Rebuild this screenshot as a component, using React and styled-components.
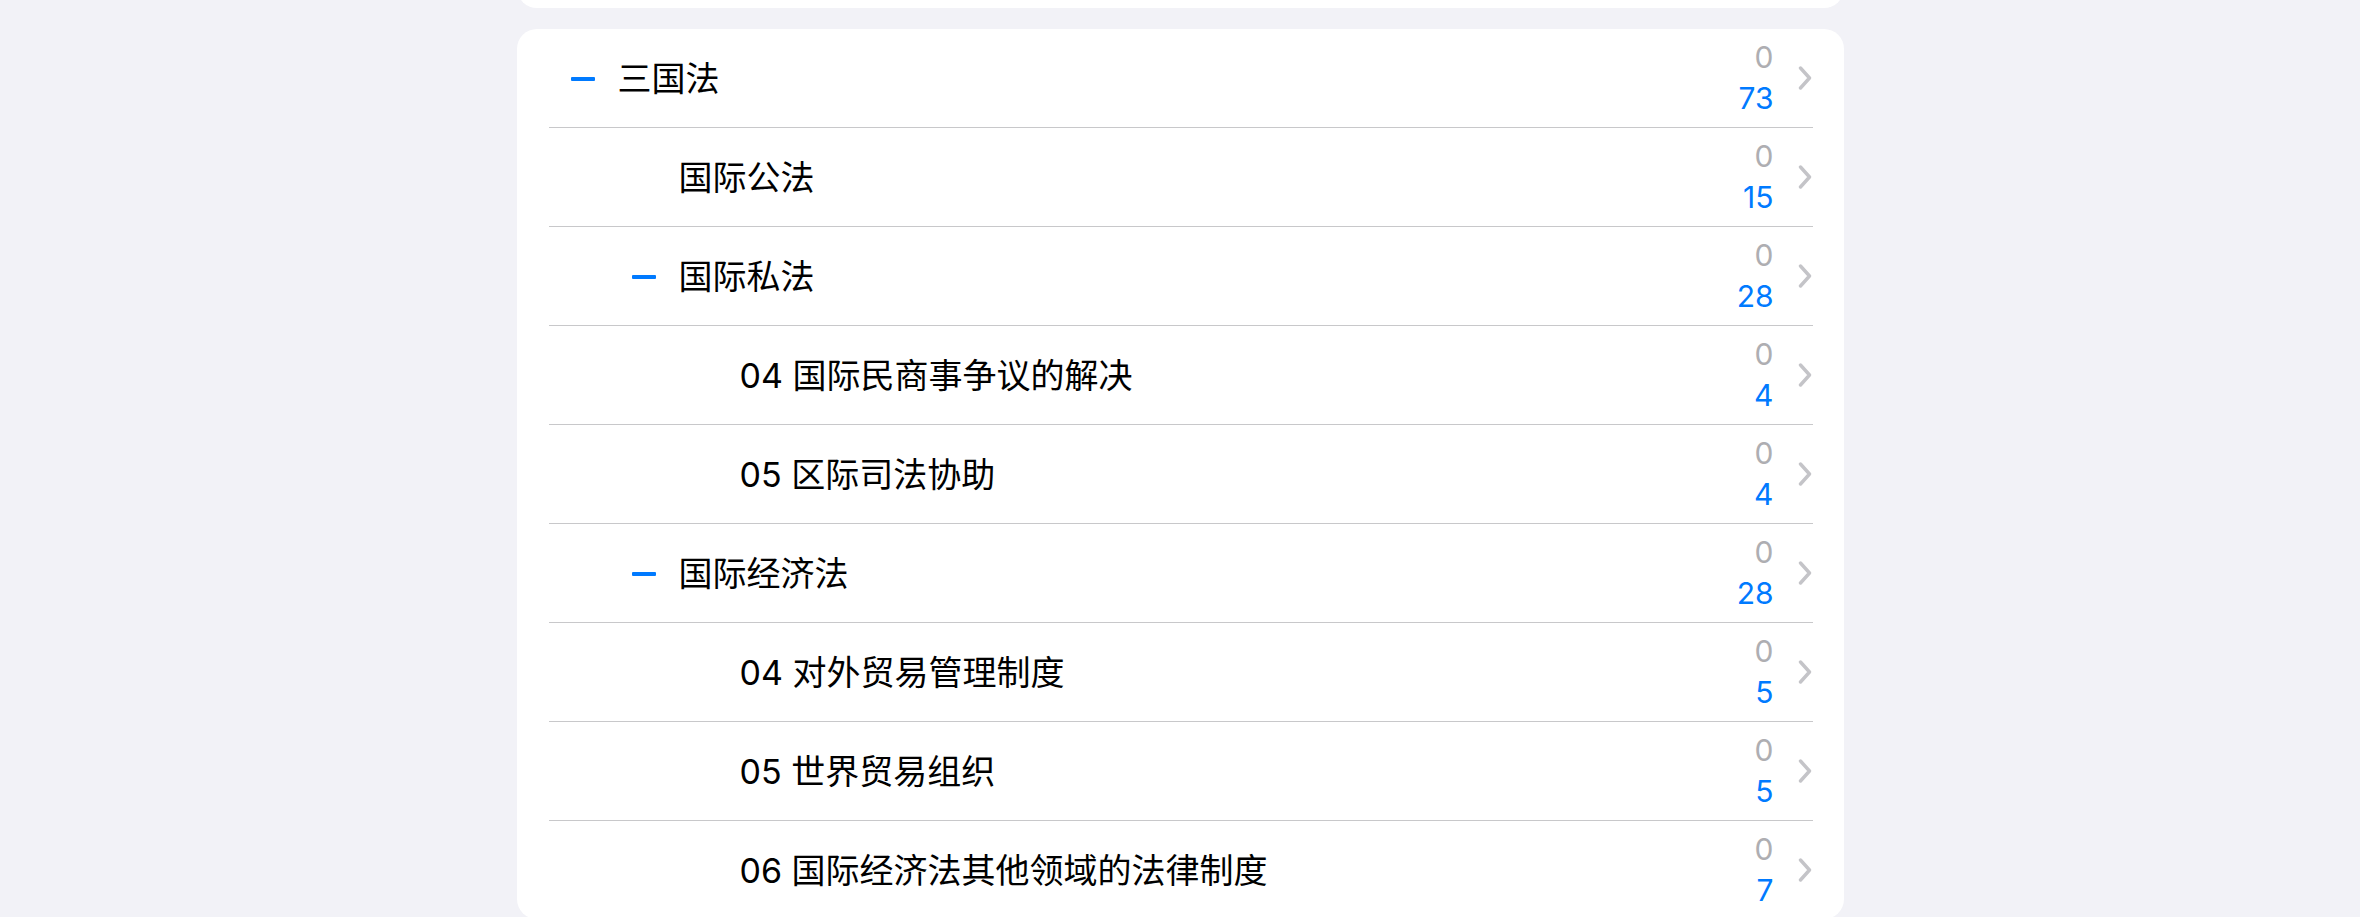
import styled, { createGlobalStyle } from "styled-components";

// data
const rows = [
  { level: 0, open: true, title: "三国法", done: 0, total: 73 },
  { level: 1, open: false, title: "国际公法", done: 0, total: 15 },
  { level: 1, open: true, title: "国际私法", done: 0, total: 28 },
  { level: 2, open: false, title: "04 国际民商事争议的解决", done: 0, total: 4 },
  { level: 2, open: false, title: "05 区际司法协助", done: 0, total: 4 },
  { level: 1, open: true, title: "国际经济法", done: 0, total: 28 },
  { level: 2, open: false, title: "04 对外贸易管理制度", done: 0, total: 5 },
  { level: 2, open: false, title: "05 世界贸易组织", done: 0, total: 5 },
  { level: 2, open: false, title: "06 国际经济法其他领域的法律制度", done: 0, total: 7 },
];

// styled styling //
const GlobalStyle = createGlobalStyle`
  html, body {
    margin: 0;
    padding: 0;
    background: #f2f2f7;
    font-family: "Inter", "Noto Sans CJK SC", sans-serif;
    overflow: hidden;
  }
`;

const Page = styled.div`
  width: 1327px;
  margin: 0 auto;
  display: flex;
  flex-direction: column;
  gap: 21px;
`;

const Card = styled.div`
  background: #ffffff;
  border-radius: 20px;
  overflow: hidden;
`;

const TopCard = styled(Card)`
  height: 40px;
  margin-top: -32px;
`;

const List = styled(Card)`
  padding: 0 31px 0 32px;
`;

const Row = styled.div`
  height: 98px;
  display: flex;
  align-items: center;
  border-bottom: ${props => (props.last ? "none" : "1px solid #c8c8ca")};
`;

const Toggle = styled.div`
  width: 24px;
  flex: none;
  margin-left: ${props => 22 + props.level * 61}px;
  margin-right: 23px;
  display: flex;
  align-items: center;
  span {
    display: ${props => (props.open ? "block" : "none")};
    width: 24px;
    height: 4px;
    margin-top: 1px;
    border-radius: 1px;
    background: #007aff;
  }
`;

const Label = styled.div`
  flex: 1;
  font-size: 34px;
  color: #000000;
  white-space: nowrap;
  padding-bottom: 3px;
`;

const Counts = styled.div`
  display: flex;
  flex-direction: column;
  align-items: flex-end;
  font-size: 30px;
  line-height: 41px;
  margin-right: 24px;

  .done {
    color: #aeaeb2;
  }
  .total {
    color: #007aff;
  }
`;

const Chevron = () => (
  <svg width="14" height="24" viewBox="0 0 14 24" style={{ marginRight: 1, marginTop: -1 }}>
    <path
      d="M2.5 2 L11.5 12 L2.5 22"
      fill="none"
      stroke="#c4c4c8"
      strokeWidth="3.4"
      strokeLinecap="round"
      strokeLinejoin="round"
    />
  </svg>
);

const App = () => {
  return (
    <Page>
      <GlobalStyle />
      <TopCard />
      <List>
        {rows.map((row, i) => (
          <Row key={i} last={i === rows.length - 1}>
            <Toggle level={row.level} open={row.open}>
              <span />
            </Toggle>
            <Label>{row.title}</Label>
            <Counts>
              <span className="done">{row.done}</span>
              <span className="total">{row.total}</span>
            </Counts>
            <Chevron />
          </Row>
        ))}
      </List>
    </Page>
  );
};

export default App;
